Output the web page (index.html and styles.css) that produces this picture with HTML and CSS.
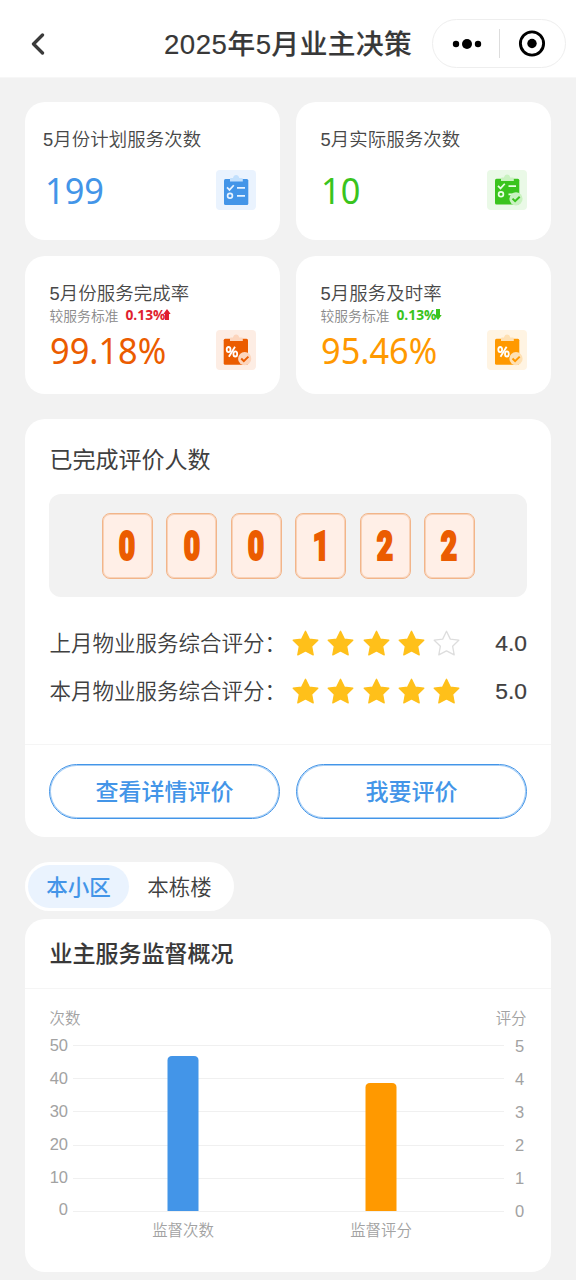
FILE: index.html
```html
<!DOCTYPE html>
<html lang="zh-CN">
<head>
<meta charset="utf-8">
<title>2025年5月业主决策</title>
<link rel="stylesheet" href="styles.css">
</head>
<body>
<svg class="defs" width="0" height="0" aria-hidden="true">
  <symbol id="star" viewBox="0 0 27 27"><path d="M13.5 1.300 17.300 9.100 25.800 10.200 19.600 16.200 21.200 24.900 13.500 20.900 5.800 24.900 7.400 16.200 1.200 10.200 9.700 9.100Z" stroke-width="1.300" stroke-linejoin="round"/></symbol>
  <symbol id="clip" viewBox="0 0 40 40"><path d="M14 11.5V8.8q0-.8.8-.8H17q.7-3 3.1-3T23.300 8H26q.8 0 .8.800V11.500Z"/></symbol>
  <symbol id="percent" viewBox="0 0 40 40"><g fill="none" stroke="#fff" stroke-width="1.800"><ellipse cx="12.600" cy="19.600" rx="1.900" ry="2.600"/><ellipse cx="19.300" cy="23.900" rx="1.900" ry="2.600"/><path d="M19 16.700 12.900 26.800"/></g></symbol>
</svg>
<header class="nav">
  <svg class="back" width="16" height="22" viewBox="0 0 16 22"><path d="M12.500 2 3.500 11l9 9"/></svg>
  <h1 class="nav-title">2025年5月业主决策</h1>
  <div class="capsule">
    <svg width="30" height="12" viewBox="0 0 30 12"><circle cx="4" cy="6" r="3.200"/><circle cx="15" cy="6" r="5"/><circle cx="26" cy="6" r="3.200"/></svg>
    <i class="capsule-line"></i>
    <svg width="28" height="28" viewBox="0 0 28 28"><circle cx="14" cy="13.500" r="11.600" fill="none" stroke="#000" stroke-width="2.900"/><circle cx="14" cy="13.500" r="4.700"/></svg>
  </div>
</header>
<main class="page">
  <section class="stats">
    <article class="stat plan">
      <div class="label">5月份计划服务次数</div>
      <div class="stat-row"><span class="value blue">199</span>
        <svg class="icon" viewBox="0 0 40 40"><rect width="40" height="40" rx="4" fill="#eaf3fe"/><rect x="8" y="9" width="24.300" height="26" rx="1.500" fill="#4395e8"/><use href="#clip" fill="#c2e0fd"/><g fill="none" stroke="#e6f2ff" stroke-width="1.700"><path d="m11 17.300 2.500 2.600 4.300-4.700M21 17.900h8M21 25.800h8"/><circle cx="14" cy="25.800" r="2.400"/></g></svg>
      </div>
    </article>
    <article class="stat">
      <div class="label">5月实际服务次数</div>
      <div class="stat-row"><span class="value green">10</span>
        <svg class="icon" viewBox="0 0 40 40"><rect width="40" height="40" rx="4" fill="#eaf9e7"/><rect x="8" y="8.700" width="24.300" height="25.800" rx="1.500" fill="#3ac41d"/><use href="#clip" y="-.5" fill="#c9f2c0"/><g fill="none" stroke="#e9ffe4" stroke-width="1.700"><path d="m11 15.800 2.500 2.600 4.300-4.700M21.500 16.200h7.500M21.500 24.300h5"/><circle cx="14" cy="24.300" r="2.400"/></g><circle cx="29" cy="28.800" r="6.600" fill="#c9f2c0"/><path d="m25.500 28.600 2.600 2.600 4.600-4.500" fill="none" stroke="#3ac41d" stroke-width="2"/></svg>
      </div>
    </article>
    <article class="stat rate">
      <div class="label">5月份服务完成率</div>
      <div class="sub">较服务标准<b class="red">0.13%</b><svg class="arrow" width="8" height="11" viewBox="0 0 8 11" fill="#e01f2f"><path d="M4 0 7.700 5H6V11H2V5H.3Z"/></svg></div>
      <div class="stat-row"><span class="value orange">99.18%</span>
        <svg class="icon" viewBox="0 0 40 40"><rect width="40" height="40" rx="4" fill="#fdede4"/><rect x="7.700" y="8.700" width="24.300" height="26" rx="1.500" fill="#eb5c00"/><use href="#clip" y="-.5" fill="#fcd5bd"/><use href="#percent"/><circle cx="28.700" cy="28.700" r="6.600" fill="#fcd5bd"/><path d="m25.200 28.500 2.600 2.600 4.600-4.500" fill="none" stroke="#eb5c00" stroke-width="2"/></svg>
      </div>
    </article>
    <article class="stat rate">
      <div class="label">5月服务及时率</div>
      <div class="sub">较服务标准<b class="green">0.13%</b><svg class="arrow" width="8" height="11" viewBox="0 0 8 11" fill="#3ac41d"><path d="M4 11 7.700 6H6V0H2V6H.3Z"/></svg></div>
      <div class="stat-row"><span class="value amber">95.46%</span>
        <svg class="icon" viewBox="0 0 40 40"><rect width="40" height="40" rx="4" fill="#fff4e3"/><rect x="8" y="8.700" width="24.300" height="26" rx="1.500" fill="#ff9900"/><use href="#clip" y="-.5" fill="#fee0b3"/><use href="#percent" x=".6"/><circle cx="29" cy="28.700" r="6.600" fill="#fee0b3"/><path d="m25.500 28.500 2.600 2.600 4.600-4.500" fill="none" stroke="#ff9900" stroke-width="2"/></svg>
      </div>
    </article>
  </section>

  <section class="card review">
    <h2 class="review-title">已完成评价人数</h2>
    <div class="counter"><span><b>0</b></span><span><b>0</b></span><span><b>0</b></span><span><b>1</b></span><span><b>2</b></span><span><b>2</b></span></div>
    <div class="ratings">
      <div class="rating"><span class="rating-name">上月物业服务综合评分：</span>
        <span class="stars"><svg class="on"><use href="#star"/></svg><svg class="on"><use href="#star"/></svg><svg class="on"><use href="#star"/></svg><svg class="on"><use href="#star"/></svg><svg class="off"><use href="#star"/></svg></span>
        <span class="score">4.0</span></div>
      <div class="rating"><span class="rating-name">本月物业服务综合评分：</span>
        <span class="stars"><svg class="on"><use href="#star"/></svg><svg class="on"><use href="#star"/></svg><svg class="on"><use href="#star"/></svg><svg class="on"><use href="#star"/></svg><svg class="on"><use href="#star"/></svg></span>
        <span class="score">5.0</span></div>
    </div>
    <div class="actions"><button class="btn">查看详情评价</button><button class="btn">我要评价</button></div>
  </section>

  <nav class="tabs"><span class="tab active">本小区</span><span class="tab">本栋楼</span></nav>

  <section class="card overview">
    <h2 class="overview-title">业主服务监督概况</h2>
    <div class="chart">
      <div class="units"><span>次数</span><span>评分</span></div>
      <div class="plot">
        <div class="ticks left"><span>50</span><span>40</span><span>30</span><span>20</span><span>10</span><span>0</span></div>
        <svg class="graph" width="431" height="168" viewBox="0 0 431 168">
          <path d="M0 .5H431M0 33.500H431M0 66.500H431M0 100.500H431M0 133.500H431M0 166.500H431" stroke="#f0f0f0"/>
          <path d="M94.500 166V15.500q0-4.500 4.500-4.500h22q4.500 0 4.500 4.500V166Z" fill="#4395e8"/>
          <path d="M292.500 166V42.500q0-4.500 4.500-4.500h22q4.500 0 4.500 4.500V166Z" fill="#ff9900"/>
        </svg>
        <div class="ticks right"><span>5</span><span>4</span><span>3</span><span>2</span><span>1</span><span>0</span></div>
      </div>
      <div class="categories"><span>监督次数</span><span>监督评分</span></div>
    </div>
  </section>
</main>
</body>
</html>
```
FILE: styles.css
```css
* { box-sizing: border-box; }
body { margin: 0; background: #f2f2f2; color: #404040; font-family: "Liberation Sans", "Noto Sans CJK SC", sans-serif; font-weight: 350; }
h1, h2 { margin: 0; font-weight: 500; white-space: nowrap; }
svg { display: block; flex: none; }
.defs { position: absolute; }

.nav { height: 78px; padding: 10px 10px 0 0; background: #fff; border-bottom: 1px solid #f7f7f7; display: grid; grid-template-columns: 164px 248px 1fr; align-items: center; }
.back { margin-left: 30px; fill: none; stroke: #3b3b3b; stroke-width: 3.3; stroke-linecap: round; stroke-linejoin: round; }
.nav-title { padding-top: 2px; font-size: 27.65px; line-height: 40px; letter-spacing: .5px; color: #383838; -webkit-text-stroke: .15px #383838; }
.capsule { justify-self: end; width: 134px; height: 49px; border: 1px solid #eee; border-radius: 25px; display: flex; align-items: center; padding-left: 19px; }
.capsule-line { width: 1px; height: 29px; background: #ddd; margin: 0 18px 0 17px; }

.page { padding: 24px 25px 8px; }
.stats { display: grid; grid-template-columns: 255px 255px; gap: 16px; }
.stat { height: 138px; background: #fff; border-radius: 20px; padding: 24px 24px 0 24.5px; }
.stat-row { display: flex; align-items: center; justify-content: space-between; height: 40px; margin-top: 16px; }
.label { font-size: 18.4px; line-height: 28px; color: #484848; letter-spacing: .1px; white-space: nowrap; }
.plan .label { margin-left: -6.5px; }
.plan .value { margin-left: -5px; }
.rate .stat-row { margin-top: 7px; }
.value { font: 400 36.500px/40px "Noto Sans", "Open Sans", sans-serif; transform: scaleX(.94); transform-origin: left; }
.icon { width: 40px; height: 40px; }
.sub { display: flex; align-items: center; height: 17px; margin: -2px 0 0; font-size: 13.8px; color: #888; white-space: nowrap; }
.sub b { margin-left: 7px; font: 700 13.8px/17px "Open Sans", sans-serif; }
.arrow { margin-left: -2.500px; }
.sub .red { color: #e01f2f; }
.blue { color: #4395e8; }
.green { color: #3ac41d; }
.orange { color: #eb5c00; }
.amber { color: #ff9900; }

.card { background: #fff; border-radius: 20px; }
.review { margin-top: 25px; height: 418px; padding-top: 24px; }
.review-title { margin-left: 24.500px; font-size: 23px; line-height: 34px; font-weight: 400; }
.counter { margin: 17px 24px 0; height: 103px; border-radius: 12px; background: #f2f2f2; display: flex; align-items: center; justify-content: center; gap: 13.400px; padding-left: 1px; }
.counter span { width: 51px; height: 66px; border: 1px solid #f2b58a; box-shadow: inset 0 0 0 1px #f8d2b8; border-radius: 8px; background: #ffefe7; display: flex; align-items: center; justify-content: center; }
.counter b { font: 900 41.500px/60px Roboto, sans-serif; color: #eb5c00; transform: scaleX(.68); -webkit-text-stroke: 2.200px #eb5c00; }
.ratings { padding: 22.500px 24px 0 24.500px; height: 147px; }
.rating { display: flex; align-items: center; height: 47.700px; font-size: 21.500px; }
.rating-name { width: 242.500px; padding-bottom: 3px; white-space: nowrap; }
.stars { display: flex; gap: 8.300px; }
.stars svg { width: 27px; height: 27px; }
.on { fill: #ffc01a; stroke: #ffc01a; }
.off { fill: #fff; stroke: #ddd; }
.score { margin-left: auto; font-size: 22.800px; -webkit-text-stroke: .2px #404040; }
.actions { border-top: 1px solid #f5f5f5; padding: 18.500px 24px 0; display: grid; grid-template-columns: 1fr 1fr; gap: 16px; }
.btn { height: 55px; padding: 0; border: 1px solid #4395e8; box-shadow: inset 0 0 0 1px #a5cdf5; border-radius: 28px; background: #fff; color: #4395e8; font: 500 23px/50px "Noto Sans CJK SC", sans-serif; padding-bottom: 2px; }

.tabs { margin-top: 25px; width: 209px; height: 49px; padding: 3px; border-radius: 25px; background: #fff; display: flex; align-items: center; }
.tab { width: 101px; height: 43px; border-radius: 22px; padding-top: 1.500px; font-size: 21.500px; line-height: 43px; text-align: center; }
.active { background: #eaf3fe; color: #4395e8; font-weight: 500; }

.overview { margin-top: 8px; height: 353px; }
.overview-title { height: 70px; padding-left: 24.500px; border-bottom: 1px solid #f5f5f5; font-size: 23px; line-height: 70px; color: #383838; -webkit-text-stroke: .1px #383838; }
.chart { color: #a2a2a2; font-size: 15.400px; }
.units { display: flex; justify-content: space-between; padding: 19px 24.500px 0; line-height: 22px; }
.plot { display: flex; padding-left: 24px; margin-top: 15px; height: 168px; }
.ticks { display: flex; flex-direction: column; font-size: 16.500px; line-height: 32.900px; margin-top: -16px; }
.ticks span { height: 32.900px; }
.left { width: 19px; text-align: right; margin-right: 5px; }
.right { margin-left: 11px; line-height: 34px; }
.right span { height: 33px; }
.categories { display: grid; grid-template-columns: 198px 198px; padding-left: 59px; text-align: center; line-height: 22px; margin-top: 7px; }
```
